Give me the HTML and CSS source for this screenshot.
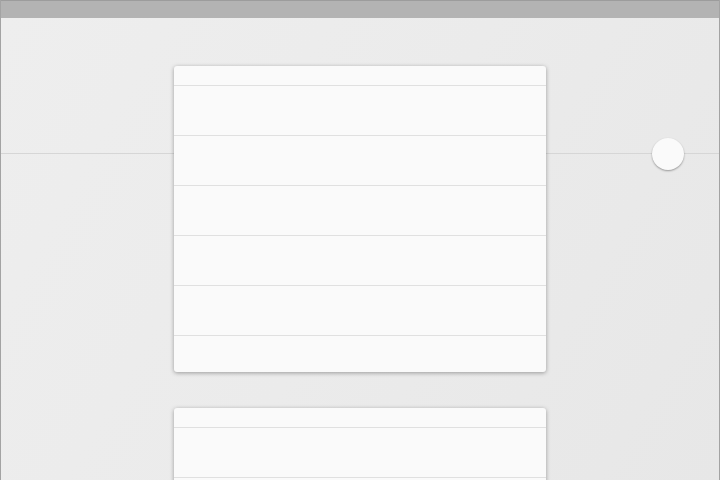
FILE: index.html
```html
<!DOCTYPE html>
<html>
<head>
    <title>Lists</title>
    <link rel="stylesheet" href="styles.css">
</head>
<body>
    <div class="frame">
        <div class="titlebar"></div>
        <div class="canvas">
            <div class="knob"></div>

            <div class="card">
                <div class="card-head"></div>
                <div class="row"></div>
                <div class="row"></div>
                <div class="row"></div>
                <div class="row"></div>
                <div class="row"></div>
                <div class="row last"></div>
            </div>

            <div class="card">
                <div class="card-head"></div>
                <div class="row"></div>
                <div class="row"></div>
            </div>
        </div>
    </div>
</body>
</html>
```

FILE: styles.css
```css
html, body {
    margin: 0;
    height: 100%;
    overflow: hidden;
    font-family: "Liberation Sans", Arial, sans-serif;
}

.frame {
    display: flex;
    flex-direction: column;
    height: 480px;
    border-left: 1px solid #a3a3a3;
    border-right: 1px solid #a3a3a3;
    box-sizing: border-box;
}

.titlebar {
    height: 17px;
    flex: none;
    background-color: #b3b3b3;
    border-top: 1px solid #9c9c9c;
}

.canvas {
    position: relative;
    flex: 1;
    display: flex;
    flex-direction: column;
    align-items: center;
    gap: 36px;
    padding-top: 48px;
    padding-right: 1px;
    overflow: hidden;
    background-color: #ececec;
    background-image:
        linear-gradient(to bottom, transparent 135px, #d6d6d6 135px, #d6d6d6 136px, transparent 136px),
        linear-gradient(120deg, #eeeeee 0%, #ebebeb 50%, #e7e7e7 100%);
}

/* handle sitting on the divider line */
.knob {
    position: absolute;
    left: 651px;
    top: 120px;
    width: 32px;
    height: 32px;
    border-radius: 50%;
    background-color: #fafafa;
    box-shadow: 0 1px 2px rgba(0, 0, 0, 0.35);
}

.card {
    flex: none;
    width: 372px;
    background-color: #fafafa;
    border-radius: 3px;
    box-shadow: 0 1px 4px rgba(0, 0, 0, 0.35);
}

.card-head {
    height: 19px;
}

.row {
    height: 49px;
    border-top: 1px solid #e0e0e0;
}

.row.last {
    height: 36px;
}
```
